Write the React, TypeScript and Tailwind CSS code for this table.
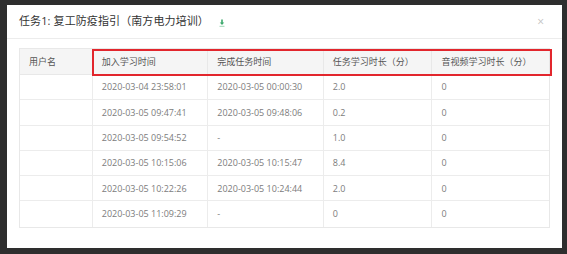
const headers = ["用户名", "加入学习时间", "完成任务时间", "任务学习时长（分）", "音视频学习时长（分）"];

const rows = [
  ["", "2020-03-04 23:58:01", "2020-03-05 00:00:30", "2.0", "0"],
  ["", "2020-03-05 09:47:41", "2020-03-05 09:48:06", "0.2", "0"],
  ["", "2020-03-05 09:54:52", "-", "1.0", "0"],
  ["", "2020-03-05 10:15:06", "2020-03-05 10:15:47", "8.4", "0"],
  ["", "2020-03-05 10:22:26", "2020-03-05 10:24:44", "2.0", "0"],
  ["", "2020-03-05 11:09:29", "-", "0", "0"],
];

const colW = ["w-[72px]", "w-[116px]", "w-[116px]", "w-[109px]", "w-[118px]"];

export default function App() {
  return (
    <div
      className="w-[567px] h-[254px] bg-[#2e2e2e] pl-[7px] pt-[5px]"
      style={{ fontFamily: '"Open Sans", "Noto Sans CJK SC", sans-serif' }}
    >
      <div className="w-[555px] h-[243px] bg-white flex flex-col">
        {/* Header */}
        <div className="h-[34px] flex items-center px-3 border-b border-[#ececec] shrink-0">
          <span className="text-[11px] text-[#333] tracking-[0.1px]">任务1: 复工防疫指引（南方电力培训）</span>
          <svg width="6" height="8" viewBox="0 0 6 8" className="ml-[10px] mt-[3px]">
            <path d="M3 0.5 V4.5" stroke="#3aa86b" strokeWidth="1.6" />
            <path d="M0.8 3.6 L3 6 L5.2 3.6 Z" fill="#3aa86b" />
            <rect x="0.5" y="6.8" width="5" height="1" fill="#9fd6b6" />
          </svg>
          <span className="ml-auto mr-[6px] text-[12px] leading-none text-[#c4c4c4]">×</span>
        </div>

        {/* Table */}
        <div className="px-3 pt-[9px]">
          <div className="relative border border-[#e8e8e8]">
            <div className="flex h-[26px] bg-[#f5f5f5] border-b border-[#e8e8e8]">
              {headers.map((h, i) => (
                <div
                  key={i}
                  className={`${colW[i]} flex items-center pl-[9px] text-[9px] text-[#555] ${i > 0 ? "border-l border-[#e8e8e8]" : ""}`}
                >
                  {h}
                </div>
              ))}
            </div>
            {rows.map((r, ri) => (
              <div
                key={ri}
                className={`flex h-[25.3px] ${ri < rows.length - 1 ? "border-b border-[#ececec]" : ""}`}
              >
                {r.map((c, i) => (
                  <div
                    key={i}
                    className={`${colW[i]} flex items-center pl-[9px] text-[9px] text-[#7c7c7c] ${i > 0 ? "border-l border-[#ececec]" : ""}`}
                  >
                    {c}
                  </div>
                ))}
              </div>
            ))}
            {/* annotation box */}
            <div className="absolute left-[72px] top-0 w-[460px] h-[27px] border-2 border-[#e2262d] pointer-events-none" />
          </div>
        </div>
      </div>
    </div>
  );
}
